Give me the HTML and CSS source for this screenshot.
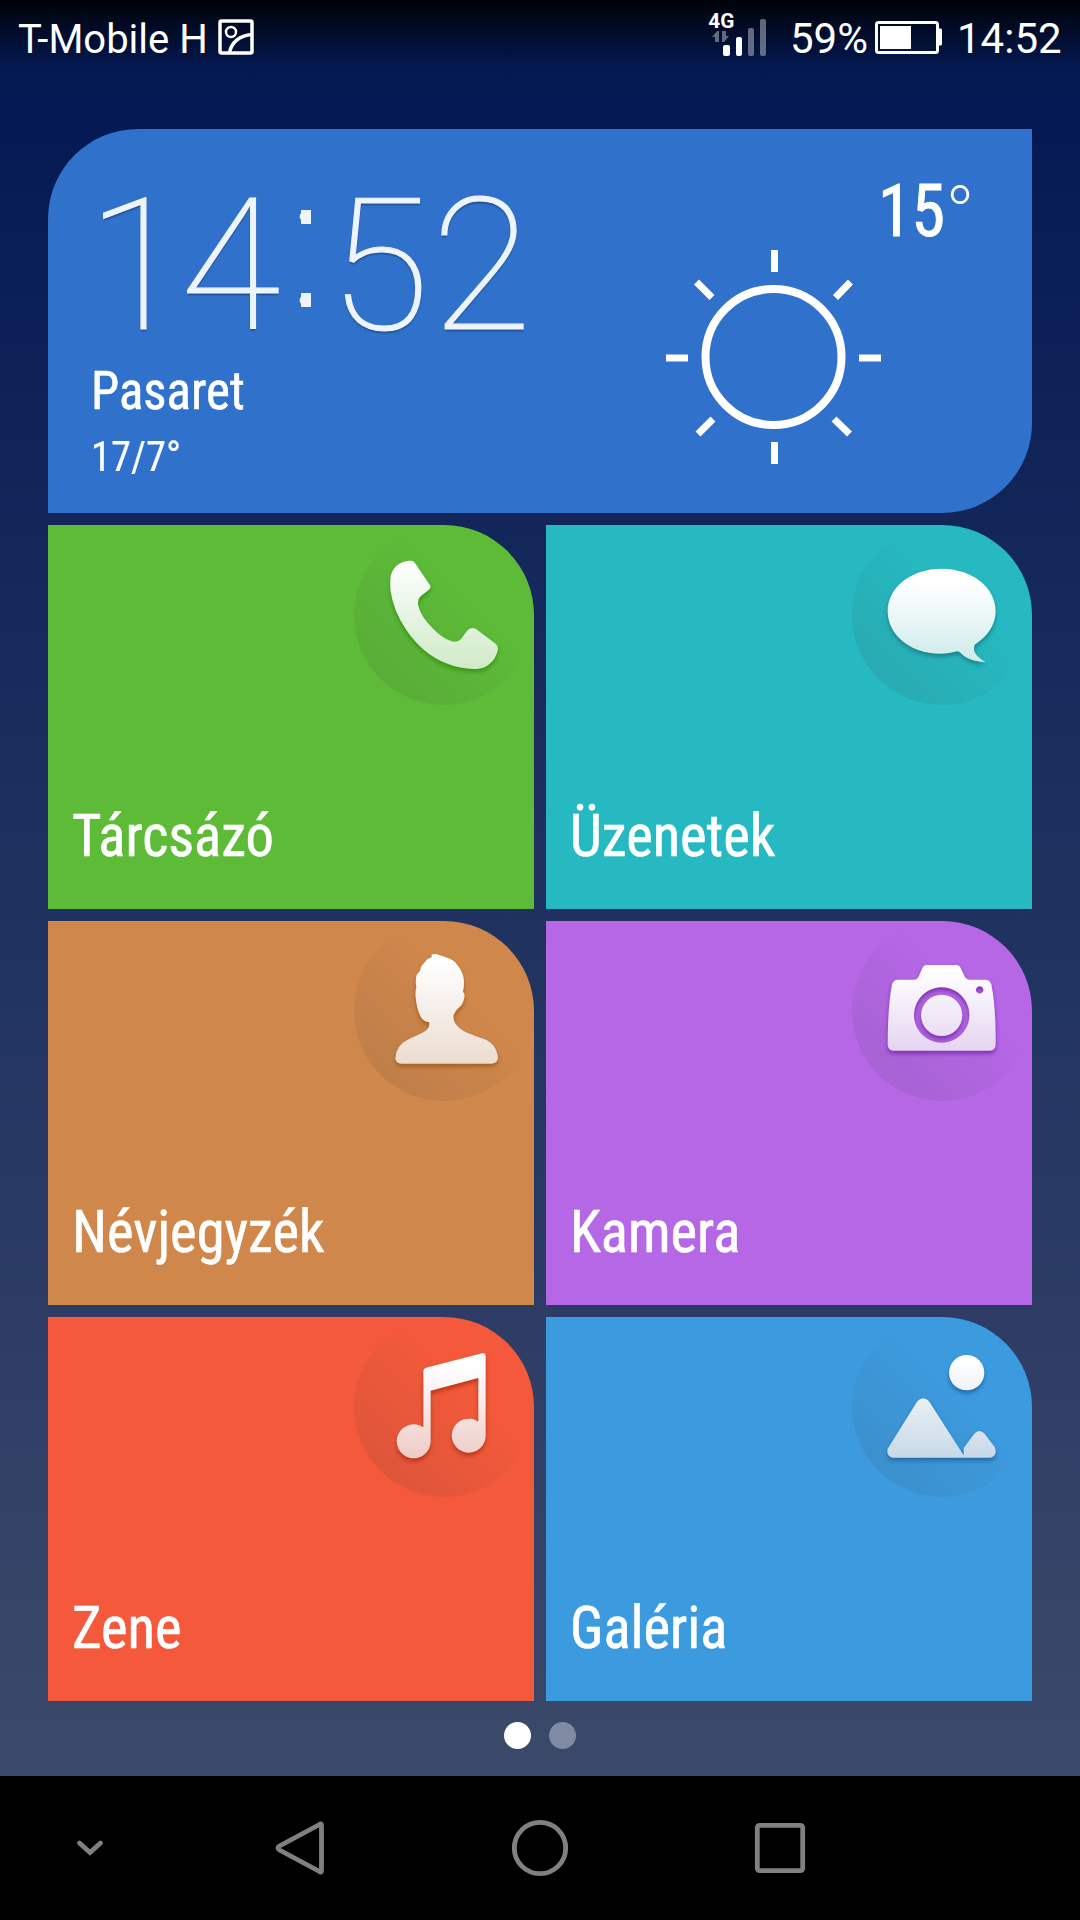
FILE: index.html
```html
<!DOCTYPE html>
<html lang="hu">
<head>
<meta charset="utf-8">
<title>Kezdőképernyő</title>
<link rel="stylesheet" href="styles.css">
</head>
<body>
<svg class="defs" width="0" height="0" aria-hidden="true">
  <defs>
    <linearGradient id="g-green" gradientUnits="userSpaceOnUse" x1="0" y1="120" x2="0" y2="450"><stop offset="0" stop-color="#fff"/><stop offset="1" stop-color="#cfeac6"/></linearGradient>
    <linearGradient id="g-teal" gradientUnits="userSpaceOnUse" x1="0" y1="190" x2="0" y2="430"><stop offset="0" stop-color="#fff"/><stop offset="1" stop-color="#cdebea"/></linearGradient>
    <linearGradient id="g-orange" gradientUnits="userSpaceOnUse" x1="0" y1="150" x2="0" y2="462"><stop offset="0" stop-color="#fff"/><stop offset="1" stop-color="#ebdcd1"/></linearGradient>
    <linearGradient id="g-purple" gradientUnits="userSpaceOnUse" x1="0" y1="180" x2="0" y2="422"><stop offset="0" stop-color="#fff"/><stop offset="1" stop-color="#e6d5f2"/></linearGradient>
    <linearGradient id="g-red" gradientUnits="userSpaceOnUse" x1="0" y1="170" x2="0" y2="445"><stop offset="0" stop-color="#fff"/><stop offset="1" stop-color="#eecbc5"/></linearGradient>
    <linearGradient id="g-blue" gradientUnits="userSpaceOnUse" x1="0" y1="150" x2="0" y2="445"><stop offset="0" stop-color="#fff"/><stop offset="1" stop-color="#c8d8e8"/></linearGradient>
  </defs>
</svg>
<div class="screen">
  <header class="status">
    <span class="carrier">T-Mobile H</span>
    <svg class="shot" viewBox="0 0 36 36"><rect x="2" y="2" width="32" height="32" rx="1.5"/><circle cx="13" cy="13" r="5"/><path d="M11.5 34C13 24 21 16.500 34 15.500"/></svg>
    <svg class="signal" viewBox="0 0 60 46">
      <text x="0.300" y="15.300" textLength="26" lengthAdjust="spacingAndGlyphs">4G</text>
      <g class="dim"><path d="M4 24L9 18h2v11H7v-5zM14 18h4v5h3l-5 6h-2z"/><rect x="40" y="15" width="6" height="28" rx="2"/><rect x="52" y="6" width="6" height="37" rx="2"/></g>
      <rect x="15" y="32" width="7" height="11" rx="2"/><rect x="28" y="24" width="6" height="19" rx="2"/>
    </svg>
    <span class="percent">59%</span>
    <svg class="battery" viewBox="0 0 68 33"><rect x="1.500" y="1.500" width="61" height="30" rx="2" fill="none" stroke="#fff" stroke-width="3"/><rect x="5" y="5" width="31" height="23"/><path d="M64 7.500h1.500q1.500 0 1.500 1.500v14q0 1.500-1.500 1.500H64z"/></svg>
    <span class="time">14:52</span>
  </header>

  <main class="home">
    <section class="weather">
      <div class="left">
        <div class="clock"><span class="d1">1</span><span class="d2">4</span><span class="colon">:</span><span class="d3">5</span><span class="d4">2</span></div>
        <div class="city">Pasaret</div>
        <div class="range">17/7°</div>
      </div>
      <svg class="sun" viewBox="-108 -108 216 216">
        <circle cx="-.5" cy="-1" r="68"/>
        <path d="M.5-108v22M.5 84v22M-108 0h22M85 0h22M-77.500-76l15.500 15.500M76.500-76L61.500-60.500M-76 76l15-15M75.500 76L60 61"/>
      </svg>
      <div class="temp"><span class="num">15</span><span class="deg">°</span></div>
    </section>

    <section class="tile green">
      <span class="label">Tárcsázó</span>
      <div class="badge"><svg viewBox="42 15 540 540" fill="url(#g-green)"><path d="M208 122Q220 121 225 129L269 194Q275 203 265 211L242 229Q231 238 235 257Q242 288 278 325Q308 356 335 364Q352 369 363 357L380 334Q392 318 408 327L467 371Q476 377 473 392Q468 414 451 430Q434 447 410 447Q365 449 318 430Q247 402 197 327Q161 273 152 215Q149 192 152 168Q158 143 180 130Q193 123 208 122Z"/></svg></div>
    </section>
    <section class="tile teal">
      <span class="label">Üzenetek</span>
      <div class="badge"><svg viewBox="36 15 540 540" fill="url(#g-teal)"><path d="M305 146C396 146 467 202 467 273C467 315 442 350 404 374C397 393 407 408 437 426C402 425 378 416 362 399Q356 392 345 395Q325 401 300 401C208 400 143 344 143 273C143 202 214 146 305 146Z"/></svg></div>
    </section>
    <section class="tile orange">
      <span class="label">Névjegyzék</span>
      <div class="badge"><svg viewBox="42 33 540 540" fill="url(#g-orange)"><path d="M274 134Q286 129 298 135L326 145Q343 151 352 165Q368 184 371 205Q374 221 369 246Q375 249 373 262Q370 284 355 295Q346 302 341 316Q336 342 370 362Q390 373 430 386Q470 400 474 444Q473 459 455 461H184Q167 460 166 444Q168 406 203 389L247 368Q272 356 267 336Q250 335 242 320Q230 298 227 262Q225 246 229 231Q225 213 230 194L240 182Q243 166 253 158Q258 148 276 140Z"/></svg></div>
    </section>
    <section class="tile purple">
      <span class="label">Kamera</span>
      <div class="badge"><svg viewBox="36 33 540 540" fill="url(#g-purple)"><path fill-rule="evenodd" d="M259 165H349Q358 165 362 174L373 197Q378 209 391 209H435Q450 209 454 223Q468 290 467 405Q466 422 450 422H160Q144 421 143 405Q143 290 156 223Q160 209 174 209H222Q233 208 237 197L247 174Q251 165 259 165ZM305 232A83 83 0 1 0 305.100 232ZM419 229A11 11 0 1 0 419.100 229Z"/><circle cx="305" cy="316" r="62"/></svg></div>
    </section>
    <section class="tile red">
      <span class="label">Zene</span>
      <div class="badge"><svg viewBox="42 21 540 540" fill="url(#g-red)"><path d="M258 173L426 130Q437 127 437 139V375A51 51 0 1 1 415 335V204L272 242V395A51 51 0 1 1 250 352V183Q250 175 258 173Z"/></svg></div>
    </section>
    <section class="tile blue">
      <span class="label">Galéria</span>
      <div class="badge"><svg viewBox="36 21 540 540" fill="url(#g-blue)"><circle cx="380" cy="188" r="53"/><path d="M232 274Q249 256 267 274L371 436V414L403 371Q418 355 434 371L464 411Q474 435 453 443H158Q138 439 143 416Z"/></svg></div>
    </section>
  </main>

  <div class="pages"><i class="on"></i><i></i></div>

  <nav class="nav">
    <svg width="28" height="20" viewBox="0 0 28 20"><path stroke-linecap="round" d="M3.500 5L14 14.500 24.500 5"/></svg>
    <svg width="50" height="56" viewBox="0 0 50 56"><path d="M46.500 5.500V50.500Q46.500 53 44.500 51.500L4.500 30Q1.500 28 4.500 26L44.500 4.500Q46.500 3 46.500 5.500Z"/></svg>
    <svg width="58" height="58" viewBox="0 0 58 58"><circle cx="29" cy="29" r="25.700"/></svg>
    <svg width="52" height="52" viewBox="0 0 52 52"><rect x="3.300" y="3.300" width="45.400" height="45.400" rx="2.500"/></svg>
  </nav>
</div>
</body>
</html>
```
FILE: styles.css
```css
* { box-sizing: border-box; }
body { margin: 0; background: #000; }
.defs { display: block; height: 0; }
.screen {
  width: 1080px;
  height: 1920px;
  display: flex;
  flex-direction: column;
  overflow: hidden;
  color: #fff;
  font-family: Roboto, "Liberation Sans", sans-serif;
  background:
    linear-gradient(rgba(0,0,0,.9), rgba(0,0,0,0) 68px),
    linear-gradient(#03174f 0, #051a54 130px, #13265a 515px, #1f325f 910px, #2c3c65 1310px, #3a4969 1730px, #3a4969 1776px);
}
.status {
  height: 129px;
  padding: 0 17px 0 18px;
  display: flex;
  align-items: flex-start;
  flex: none;
  white-space: nowrap;
}
.status span { line-height: 44px; margin-top: 17px; flex: none; }
.status svg { fill: #fff; flex: none; }
.status .carrier { width: 200px; font-size: 40px; margin-top: 18px; }
.shot { width: 36px; height: 36px; margin-top: 19px; }
.status .shot { fill: none; stroke: #fff; stroke-width: 3.5; }
.shot circle { stroke-width: 2.5; }
.signal { width: 60px; height: 46px; margin: 13px 0 0 454px; font: bold 20px Roboto, sans-serif; overflow: visible; }
.signal .dim { opacity: .38; }
.status .percent { width: 84px; margin-left: 22px; font-size: 42px; }
.battery { width: 68px; height: 33px; margin: 21px 0 0 1px; }
.status .time { width: 105px; margin-left: 14px; font-size: 42px; }

.home {
  padding: 0 48px;
  display: grid;
  grid-template-columns: 486px 486px;
  grid-auto-rows: 384px;
  gap: 12px;
  flex: none;
}
.weather {
  grid-column: 1 / 3;
  display: flex;
  background: #2f71cb;
  border-radius: 90px 0 90px 0;
  white-space: nowrap;
}
.left { width: 618px; padding: 30px 0 0 43px; flex: none; }
.clock {
  display: flex;
  height: 202px;
  line-height: 216px;
  font-size: 183px;
  font-weight: 100;
  color: #edf4fc;
  -webkit-text-stroke: 1.2px #edf4fc;
  text-shadow: 0 2px 2px rgba(0,0,0,.35);
}
.d1 { margin-left: -4px; }
.d2 { margin-left: -7px; }
.colon {
  width: 47px;
  margin-left: 2px;
  text-align: center;
  text-indent: -3px;
  font: 100 178px/161px Inter, sans-serif;
  text-shadow: none;
  -webkit-text-stroke: 0;
  background:
    linear-gradient(#edf4fc, #edf4fc) 50% 51px / 10px 14px no-repeat,
    linear-gradient(#edf4fc, #edf4fc) 50% 134px / 10px 14px no-repeat;
}
.d4 { margin-left: 2px; }
.city, .range, .num, .label {
  font-stretch: 75%;
  font-weight: 400;
  -webkit-text-stroke: .6px #fff;
  transform-origin: 0 50%;
  transform: scaleX(.943);
}
.city { height: 60px; line-height: 60px; font-size: 54px; }
.range { height: 66px; line-height: 72px; font-size: 42px; transform: scaleX(.965); -webkit-text-stroke: .2px #fff; }
.sun { width: 216px; height: 216px; margin-top: 121px; fill: none; stroke: #fff; stroke-width: 7; flex: none; }
.sun circle { stroke-width: 8; }
.temp { display: flex; margin: 41px 0 0 -4px; height: 84px; line-height: 84px; font-size: 72px; }
.num { -webkit-text-stroke: 1px #fff; }
.deg { font-weight: 200; font-size: 79px; margin: 4px 0 0 -4px; }

.tile { display: flex; justify-content: space-between; border-radius: 0 90px 0 0; }
.label { align-self: flex-end; width: 280px; margin: 0 0 35px 24px; line-height: 76px; font-size: 60px; white-space: nowrap; }
.badge { width: 180px; height: 180px; border-radius: 50%; background: linear-gradient(45deg, rgba(60,60,60,.15), rgba(60,60,60,0) 62%); }
.badge svg { display: block; width: 180px; height: 180px; filter: drop-shadow(0 3px 2px var(--shade)); }
.green { background: #5dbb38; --shade: #38960f; }
.teal { background: #26b9c1; --shade: #16858c; }
.orange { background: #d0874b; --shade: #a8601e; }
.purple { background: #b567e6; --shade: #7d30b0; }
.red { background: #f3593a; --shade: #ba3519; }
.blue { background: #3c9bdf; --shade: #1f6ca8; }

.pages { height: 75px; flex: none; display: flex; justify-content: center; gap: 18px; padding: 21px 1px 0 0; }
.pages i { width: 27px; height: 27px; border-radius: 50%; background: #7f8ba2; }
.pages .on { background: #fff; }
.nav {
  height: 144px;
  flex: none;
  display: grid;
  grid-template-columns: 180px 240px 240px 240px;
  place-items: center;
  background: #000;
}
.nav svg { fill: none; stroke: #808080; stroke-width: 4.800; }
```
